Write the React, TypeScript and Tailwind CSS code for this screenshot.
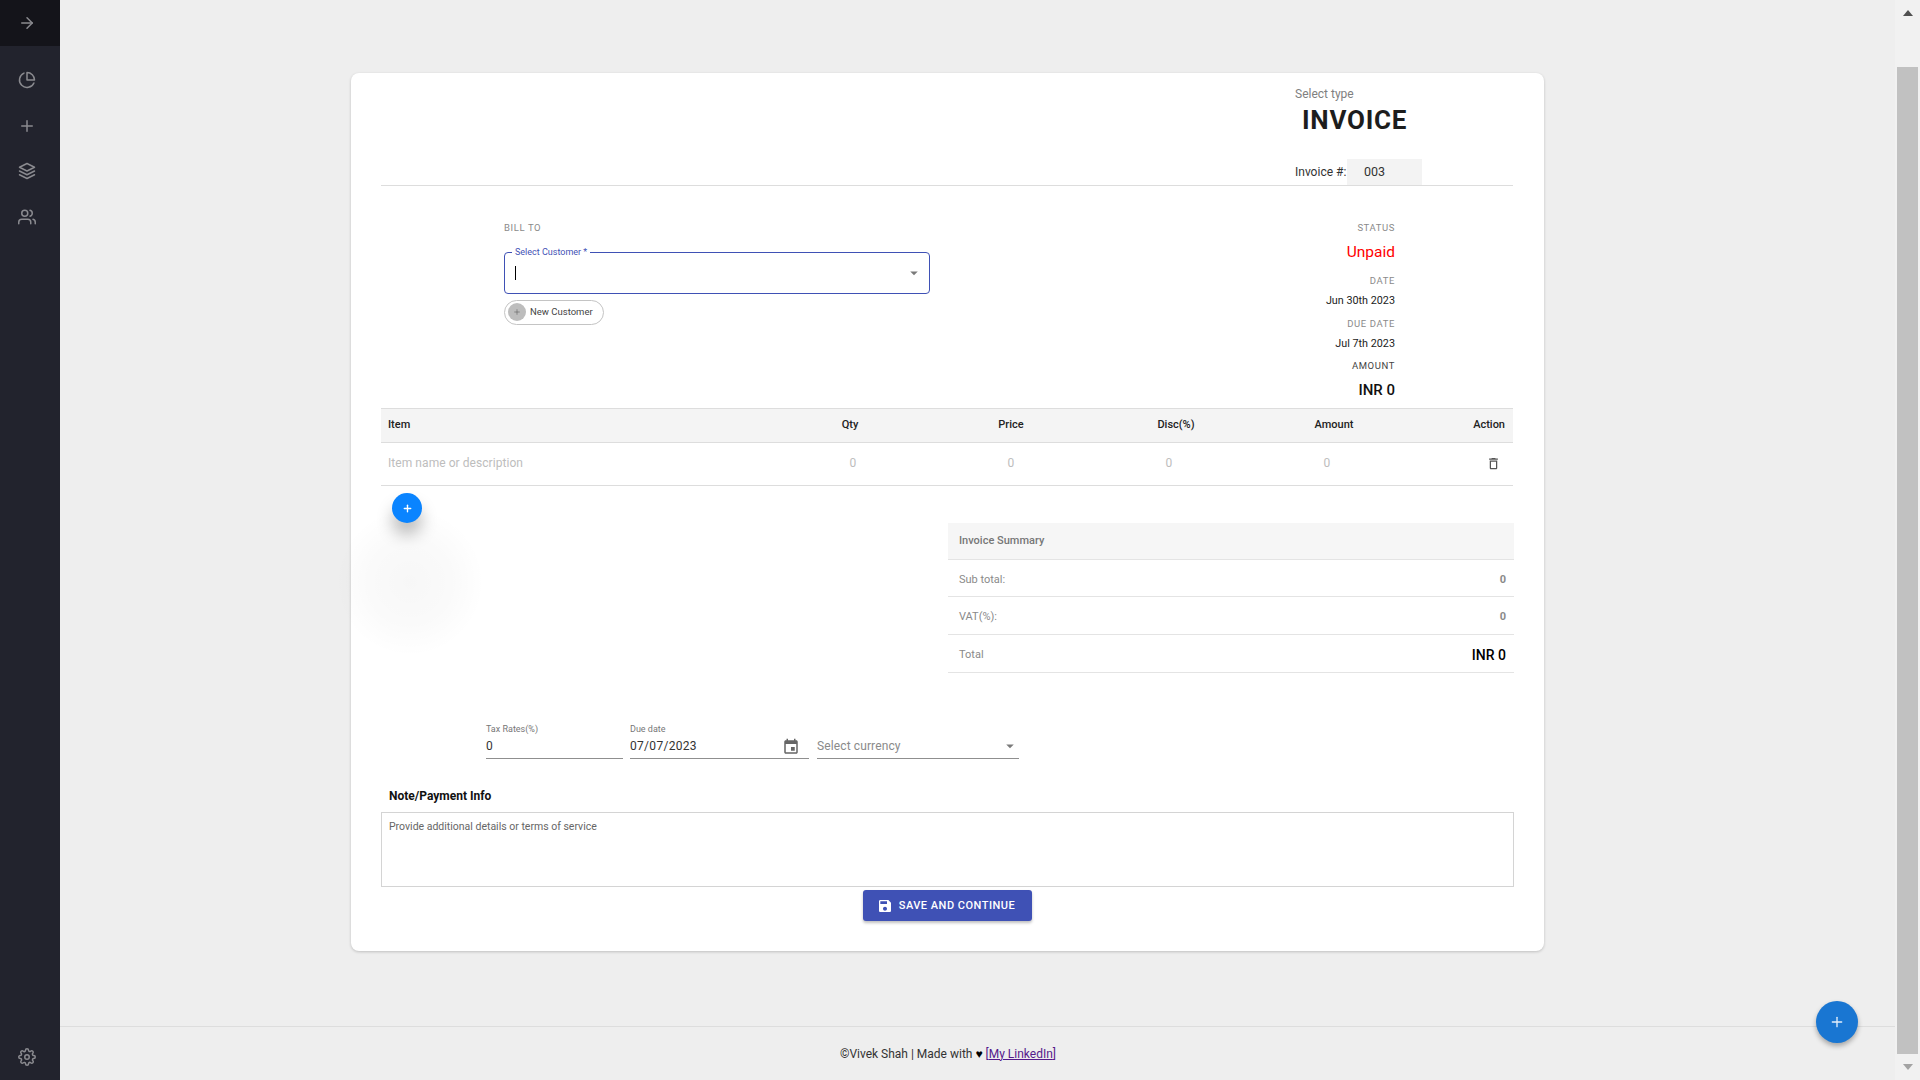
import React from "react";
import { FiArrowRight, FiPieChart, FiPlus, FiLayers, FiUsers, FiSettings } from "react-icons/fi";

const Mui = ({ d, className }: { d: string; className?: string }) => (
  <svg viewBox="0 0 24 24" fill="currentColor" className={className}>
    <path d={d} />
  </svg>
);
const DROP = "M7 10l5 5 5-5z";

const Meta = ({ children, className = "" }: { children: React.ReactNode; className?: string }) => (
  <div className={`text-[9.5px] tracking-[0.6px] text-[#8a8a8a] text-right leading-none ${className}`}>{children}</div>
);

const SumRow = ({ label, value, h, big }: { label: string; value: string; h: string; big?: boolean }) => (
  <div className={`flex items-center justify-between border-b border-[#e4e4e4] pl-[11px] pr-[8px] pt-[4px] text-[11px] text-[#8a8a8a] ${h}`}>
    <span>{label}</span>
    <span className={big ? "text-[14px] font-medium text-black" : "font-bold"}>{value}</span>
  </div>
);

const cols = "mr-[1px] grid grid-cols-[393px_158px_158px_158px_158px_1fr]";

export default function App() {
  return (
    <div className="flex h-screen w-full overflow-hidden bg-[#eeeeee] font-['Roboto',sans-serif]">
      <aside className="flex h-full w-[60px] flex-col items-center bg-[#22232d] text-[#8a8a8f]">
        <div className="flex h-[46px] w-full items-center justify-center bg-[#14141a]">
          <FiArrowRight className="mr-[6px] h-[18px] w-[18px]" />
        </div>
        <div className="mr-[6px] mt-[25px] flex flex-col items-center gap-[27.7px]">
          <FiPieChart className="h-[18px] w-[18px]" />
          <FiPlus className="h-[18px] w-[18px]" />
          <FiLayers className="h-[18px] w-[18px]" />
          <FiUsers className="h-[18px] w-[18px]" />
        </div>
        <FiSettings className="mb-[14px] mr-[6px] mt-auto h-[18px] w-[18px]" />
      </aside>

      <main className="relative flex h-full flex-1 flex-col">
        <div className="ml-[291px] mt-[73px] h-[878px] w-[1193px] rounded-[8px] bg-white px-[30px] shadow-[0_1px_3px_rgba(0,0,0,0.2)]">
          <div className="mr-[1px] h-[113px] border-b border-[#dddddd] pl-[914px]">
            <div className="pt-[14px] text-[12px] leading-[14px] text-[#808080]">Select type</div>
            <div className="ml-[7px] mt-[3px] text-[26px] font-bold leading-[32px] tracking-[0.75px] text-[#1d1d1d]">INVOICE</div>
            <div className="mt-[23px] flex h-[26px] items-center text-[12px] text-[#333]">
              <span className="w-[52px] whitespace-nowrap">Invoice #:</span>
              <span className="flex h-[26px] w-[75px] items-center bg-[#f3f3f3] pl-[17px] text-[12.5px]">003</span>
            </div>
          </div>

          <div className="flex h-[222px] justify-between">
            <div className="pl-[123px] pt-[37px]">
              <div className="text-[9.5px] leading-none tracking-[0.6px] text-[#8a8a8a]">BILL TO</div>
              <div className="relative mt-[19px] flex h-[42px] w-[426px] items-center rounded-[4px] border-[1.5px] border-[#3f51b5] pl-[10px] pr-[6px]">
                <span className="absolute -top-[6px] left-[7px] bg-white px-[3px] text-[9px] leading-[10px] text-[#3f51b5]">Select Customer *</span>
                <span className="h-[14px] w-px bg-black" />
                <Mui d={DROP} className="ml-auto h-[18px] w-[18px] text-[#7a7a7a]" />
              </div>
              <div className="mt-[6px] flex h-[25px] w-[100px] items-center rounded-full border border-[#c4c4c4] pl-[3px]">
                <span className="flex h-[18px] w-[18px] items-center justify-center rounded-full bg-[#bdbdbd] text-[#666]">
                  <FiPlus className="h-[8px] w-[8px]" />
                </span>
                <span className="ml-[4px] text-[9.5px] text-[#444]">New Customer</span>
              </div>
            </div>
            <div className="pr-[119px] pt-[37px]">
              <Meta>STATUS</Meta>
              <div className="mt-[10px] text-right text-[15.5px] leading-[18px] text-[#ff0000]">Unpaid</div>
              <Meta className="mt-[15px]">DATE</Meta>
              <div className="mt-[9px] text-right text-[10.8px] leading-[13px] text-[#222]">Jun 30th 2023</div>
              <Meta className="mt-[12px]">DUE DATE</Meta>
              <div className="mt-[8px] text-right text-[10.8px] leading-[13px] text-[#222]">Jul 7th 2023</div>
              <Meta className="mt-[11px] text-[#444]">AMOUNT</Meta>
              <div className="mt-[11px] text-right text-[15px] font-medium leading-[18px] text-[#111]">INR 0</div>
            </div>
          </div>

          <div className={`${cols} h-[35px] items-center border-y border-[#dddddd] bg-[#f4f4f4] text-[11px] font-medium text-[#222]`}>
            <span className="pl-[7px]">Item</span>
            <span className="pr-[6px] text-center">Qty</span>
            <span className="text-center">Price</span>
            <span className="pl-[14px] text-center">Disc(%)</span>
            <span className="pl-[14px] text-center">Amount</span>
            <span className="pr-[8px] text-right">Action</span>
          </div>
          <div className={`${cols} h-[43px] items-center border-b border-[#dddddd] pb-[2px] text-[12px] tracking-[0.06px] text-[#bdbdbd]`}>
            <span className="whitespace-nowrap pl-[7px]">Item name or description</span>
            <span className="text-center">0</span>
            <span className="text-center">0</span>
            <span className="text-center">0</span>
            <span className="text-center">0</span>
            <span className="flex justify-end pr-[12px]">
              <Mui d="M6 19c0 1.1.9 2 2 2h8c1.1 0 2-.9 2-2V7H6v12zM8 9h8v10H8V9zm7.5-5l-1-1h-5l-1 1H5v2h14V4z" className="h-[15px] w-[15px] text-[#555]" />
            </span>
          </div>

          <div className="flex h-[197px]">
            <div className="relative w-[567px]">
              <div className="absolute left-[-46px] top-[21px] h-[150px] w-[150px] rounded-full bg-[radial-gradient(circle,rgba(0,0,0,0.03)_0%,rgba(0,0,0,0.018)_40%,rgba(0,0,0,0)_70%)]" />
              <button className="absolute left-[11px] top-[7px] flex h-[30px] w-[30px] items-center justify-center rounded-full bg-[#0a84ff] text-white shadow-[0_12px_16px_rgba(0,0,0,0.25)]">
                <FiPlus className="h-[11px] w-[11px] stroke-[3]" />
              </button>
            </div>
            <div className="w-[566px] pt-[37px]">
              <div className="flex h-[37px] items-center border-b border-[#e4e4e4] bg-[#f6f6f6] pl-[11px] pt-[1px] text-[11px] font-medium text-[#777]">Invoice Summary</div>
              <SumRow label="Sub total:" value="0" h="h-[37px]" />
              <SumRow label="VAT(%):" value="0" h="h-[38px]" />
              <SumRow label="Total" value="INR 0" h="h-[38px]" big />
            </div>
          </div>

          <div className="ml-[105px] mt-[40px] flex h-[36px] gap-[7px]">
            <div className="h-full w-[137px] border-b border-[#8f8f8f]">
              <div className="text-[9px] leading-[13px] text-[#777]">Tax Rates(%)</div>
              <div className="mt-[2px] text-[12px] leading-[16px] text-[#333]">0</div>
            </div>
            <div className="flex h-full w-[179px] items-end border-b border-[#8f8f8f]">
              <div className="flex-1">
                <div className="mb-[2px] text-[9px] leading-[13px] text-[#777]">Due date</div>
                <div className="pb-[4px] text-[12px] leading-[16px] tracking-[0.3px] text-[#333]">07/07/2023</div>
              </div>
              <Mui d="M17 12h-5v5h5v-5zM16 1v2H8V1H6v2H5c-1.11 0-1.99.9-1.99 2L3 19c0 1.1.89 2 2 2h14c1.1 0 2-.9 2-2V5c0-1.1-.9-2-2-2h-1V1h-2zm3 18H5V8h14v11z" className="mb-[2px] mr-[9px] h-[18px] w-[18px] text-[#666]" />
            </div>
            <div className="ml-[1px] flex h-full w-[202px] items-center border-b border-[#8f8f8f] pt-[11px]">
              <span className="text-[12px] tracking-[0.12px] text-[#8a8a8a]">Select currency</span>
              <Mui d={DROP} className="ml-auto h-[18px] w-[18px] text-[#7a7a7a]" />
            </div>
          </div>

          <div className="ml-[8px] mt-[30px] text-[12px] font-bold leading-[14px] text-[#111]">Note/Payment Info</div>
          <div className="mt-[9px] h-[75px] border border-[#d4d4d4] px-[7px] py-[7px] text-[10.5px] leading-[13px] text-[#666]">Provide additional details or terms of service</div>
          <div className="mt-[3px] flex justify-center">
            <button className="flex h-[31px] w-[169px] items-center justify-center gap-[6px] rounded-[3px] bg-[#3f51b5] pr-[3px] pt-[1px] text-[11px] font-medium tracking-[0.5px] text-white shadow-[0_2px_3px_rgba(0,0,0,0.25)]">
              <Mui d="M17 3H5c-1.11 0-2 .9-2 2v14c0 1.1.89 2 2 2h14c1.1 0 2-.9 2-2V7l-4-4zm-5 16c-1.66 0-3-1.34-3-3s1.34-3 3-3 3 1.34 3 3-1.34 3-3 3zm3-10H5V5h10v4z" className="mb-[1px] h-[16px] w-[16px]" />
              SAVE AND CONTINUE
            </button>
          </div>
        </div>

        <footer className="mt-auto flex h-[54px] items-center justify-center border-t border-[#dddddd] pr-[59px] text-[12px] text-[#333]">
          <span>
            ©Vivek Shah | Made with <span className="text-black">♥</span> <span className="text-[#551a8b]">[<a className="underline" href="#">My LinkedIn</a>]</span>
          </span>
        </footer>

        <button className="absolute left-[1756px] top-[1001px] flex h-[42px] w-[42px] items-center justify-center rounded-full bg-[#1976d2] text-[#e3eefa] shadow-[0_3px_5px_rgba(0,0,0,0.3)]">
          <FiPlus className="h-[16px] w-[16px]" />
        </button>
      </main>

      <div className="flex h-full w-[25px] flex-col items-center bg-[#f1f1f1] px-[2px]">
        <div className="h-[67px] w-full pt-[10px]">
          <div className="mx-auto h-0 w-0 border-x-[5.5px] border-b-[6px] border-x-transparent border-b-[#505050]" />
        </div>
        <div className="h-[987px] w-full bg-[#c1c1c1]" />
        <div className="flex-1 pt-[10px]">
          <div className="h-0 w-0 border-x-[5.5px] border-t-[6px] border-x-transparent border-t-[#a3a3a3]" />
        </div>
      </div>
    </div>
  );
}
